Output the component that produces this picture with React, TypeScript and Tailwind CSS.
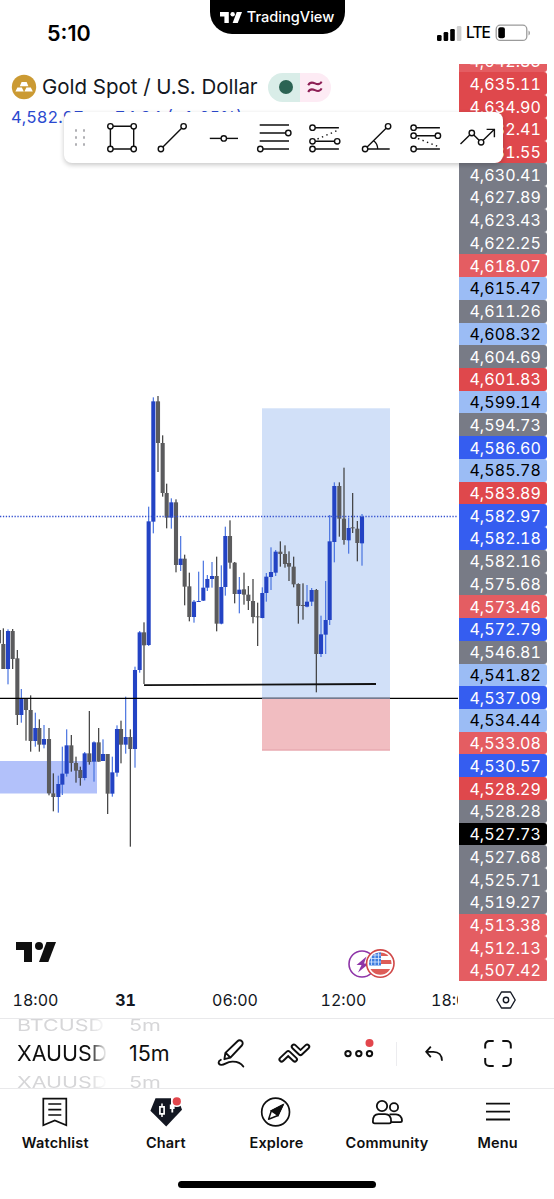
import type { ReactNode } from "react";

const RED = "bg-[#df484c] text-white";
const ROSE = "bg-[#e45d62] text-white";
const GRAY = "bg-[#787b86] text-white";
const SKY = "bg-[#9bbcf5] text-black";
const BLUE = "bg-[#355df0] text-white";
const BLACK = "bg-black text-white";

const prices: [string, string][] = [
  ["4,642.83", ROSE],
  ["4,635.11", RED],
  ["4,634.90", RED],
  ["4,632.41", RED],
  ["4,631.55", RED],
  ["4,630.41", GRAY],
  ["4,627.89", GRAY],
  ["4,623.43", GRAY],
  ["4,622.25", GRAY],
  ["4,618.07", ROSE],
  ["4,615.47", SKY],
  ["4,611.26", GRAY],
  ["4,608.32", SKY],
  ["4,604.69", GRAY],
  ["4,601.83", RED],
  ["4,599.14", SKY],
  ["4,594.73", GRAY],
  ["4,586.60", BLUE],
  ["4,585.78", SKY],
  ["4,583.89", RED],
  ["4,582.97", BLUE],
  ["4,582.18", BLUE],
  ["4,582.16", GRAY],
  ["4,575.68", GRAY],
  ["4,573.46", ROSE],
  ["4,572.79", BLUE],
  ["4,546.81", GRAY],
  ["4,541.82", SKY],
  ["4,537.09", BLUE],
  ["4,534.44", SKY],
  ["4,533.08", ROSE],
  ["4,530.57", BLUE],
  ["4,528.29", RED],
  ["4,528.28", GRAY],
  ["4,527.73", BLACK],
  ["4,527.68", GRAY],
  ["4,525.71", GRAY],
  ["4,519.27", GRAY],
  ["4,513.38", ROSE],
  ["4,512.13", ROSE],
  ["4,507.42", ROSE],
];

// [x, high, low, body top, body bottom, up]; three units to a pixel, from each session's origin
type Candle = [number, number, number, number, number, 0 | 1];

const sessions: { x: number; y: number; candles: Candle[] }[] = [
  {
    x: 0,
    y: 600,
    candles: [
      [-3, 90, 130, 90, 130, 0], [10, 85, 207, 132, 207, 0], [24, 88, 253, 93, 207, 1],
      [38, 87, 207, 93, 177, 0], [52, 150, 375, 175, 345, 0], [64, 267, 368, 297, 345, 1],
      [78, 296, 422, 297, 330, 0], [92, 286, 455, 330, 423, 0], [106, 338, 440, 384, 423, 1],
      [118, 358, 455, 384, 434, 0], [132, 375, 445, 417, 434, 1], [147, 384, 586, 417, 580, 0],
      [160, 520, 634, 580, 591, 0], [175, 527, 638, 552, 591, 1], [187, 440, 585, 521, 554, 1],
      [200, 388, 530, 436, 521, 1], [214, 405, 515, 436, 489, 0], [228, 470, 548, 489, 512, 0],
      [241, 500, 557, 510, 534, 0], [254, 456, 541, 460, 534, 1], [268, 333, 494, 460, 486, 0],
      [282, 424, 545, 427, 485, 1], [296, 384, 485, 427, 485, 0], [309, 418, 483, 462, 483, 1],
      [323, 462, 642, 462, 581, 0], [337, 470, 590, 517, 581, 1], [351, 376, 530, 387, 518, 1],
      [363, 362, 490, 387, 434, 0], [377, 290, 461, 411, 434, 1], [391, 388, 740, 411, 447, 0],
      [405, 200, 503, 210, 447, 1], [419, 93, 218, 97, 210, 1], [432, 67, 252, 97, 136, 0],
    ],
  },
  {
    x: 120,
    y: 385,
    candles: [
      [86, 365, 783, 409, 780, 1], [100, 37, 445, 49, 410, 1], [114, 33, 261, 49, 174, 0],
      [128, 151, 335, 174, 324, 0], [140, 296, 430, 324, 398, 0], [154, 340, 431, 352, 398, 1],
      [168, 343, 562, 352, 540, 0], [182, 453, 558, 521, 540, 1], [194, 509, 661, 521, 605, 0],
      [208, 563, 709, 604, 696, 0], [222, 645, 713, 650, 696, 1], [236, 560, 650, 648, 651, 1],
      [250, 527, 648, 608, 647, 1], [262, 570, 618, 582, 608, 1], [276, 531, 608, 573, 582, 1],
      [290, 515, 739, 573, 716, 0], [304, 541, 718, 606, 716, 1], [316, 425, 632, 453, 606, 1],
      [330, 406, 551, 453, 533, 0], [344, 531, 655, 533, 627, 0], [358, 576, 685, 614, 627, 1],
      [372, 563, 659, 613, 629, 0], [385, 603, 675, 629, 648, 0], [399, 582, 715, 648, 696, 0],
      [413, 653, 783, 694, 697, 0],
    ],
  },
  {
    x: 255,
    y: 400,
    candles: [
      [22, 562, 655, 579, 654, 1], [34, 519, 605, 530, 579, 1], [48, 442, 570, 516, 531, 1],
      [62, 450, 528, 455, 518, 1], [76, 424, 500, 455, 462, 0], [90, 436, 503, 462, 492, 0],
      [102, 454, 543, 489, 500, 0], [116, 470, 562, 500, 553, 0], [130, 550, 671, 552, 618, 0],
      [144, 550, 659, 615, 618, 0], [156, 555, 622, 605, 620, 1], [170, 564, 618, 570, 605, 1],
      [184, 567, 877, 570, 762, 0], [198, 647, 771, 703, 762, 1], [212, 543, 762, 660, 704, 1],
      [224, 345, 675, 424, 660, 1], [238, 247, 487, 258, 426, 1], [253, 247, 410, 258, 356, 0],
      [267, 203, 434, 356, 420, 0], [281, 353, 461, 384, 421, 1], [293, 279, 399, 382, 385, 0],
      [307, 363, 484, 386, 429, 0], [321, 342, 497, 350, 430, 1],
    ],
  },
];

function Logo({ className }: { className: string }) {
  return (
    <svg viewBox="0 0 40 20" className={className} fill="currentColor">
      <path d="M0 0h16v20H8V8H0z" />
      <circle cx="23" cy="4" r="4" />
      <path d="M30.5 0H40l-7.7 20H23z" />
    </svg>
  );
}

function StatusBar() {
  return (
    <header className="flex h-16 items-start">
      <div className="w-[209.5px] pt-[19px] pl-[47px] text-[21.5px] leading-7 font-semibold">5:10</div>
      <div className="flex h-[34px] w-[135px] items-center justify-center gap-[5px] rounded-b-[22px] bg-black text-white">
        <Logo className="h-[11px] w-[22px]" />
        <span className="text-[14.6px] leading-5 font-medium">TradingView</span>
      </div>
      <div className="flex flex-1 items-center justify-end pt-[22px] pr-[23px]">
        <svg viewBox="0 0 26 17" className="h-[17px] w-[26px]">
          <rect x="1" y="10" width="4.6" height="6" rx="1.3" />
          <rect x="7.6" y="7" width="4.6" height="9" rx="1.3" />
          <rect x="14.2" y="4" width="4.6" height="12" rx="1.3" />
          <rect x="20.8" y="1" width="4.6" height="15" rx="1.3" fill="#cfcfcf" />
        </svg>
        <span className="ml-[4px] w-[26px] text-[15.5px] leading-[22px] font-medium tracking-[-0.9px]">LTE</span>
        <svg viewBox="0 0 36 18" className="ml-[3px] h-[18px] w-9">
          <rect x="1.2" y="1.2" width="30.6" height="15.2" rx="4" fill="none" stroke="#9b9b9b" strokeWidth="1.3" />
          <rect x="3.3" y="3.3" width="6.6" height="11" rx="2" />
          <path d="M33.5 6.5c2 1 2 4 0 5z" fill="#9b9b9b" />
        </svg>
      </div>
    </header>
  );
}

function ChartCanvas() {
  return (
    <svg viewBox="0 64 459 917" className="h-[917px] w-[459px]">
      <rect x="0" y="761" width="97" height="32.5" fill="#b2c1fa" />
      <rect x="262" y="408.3" width="128" height="290" fill="#d1e0f8" />
      <rect x="262" y="698.5" width="128" height="52" fill="#f1bdc1" />
      <path d="M262 750h128" stroke="#e3a0a8" />
      {sessions.map((s) =>
        s.candles.map(([x, high, low, top, bottom, up]) => {
          const cx = s.x + x / 3;
          return (
            <g key={cx}>
              <rect
                x={cx - 0.6}
                y={s.y + high / 3}
                width={1.2}
                height={(low - high) / 3}
                fill={up ? "#4a74e0" : "#3d3d3d"}
              />
              <rect
                x={cx - 2.05}
                y={s.y + top / 3}
                width={4.1}
                height={(bottom - top) / 3}
                fill={up ? "#2343c4" : "#5b5b5d"}
              />
            </g>
          );
        }),
      )}
      <path d="M0 516.5h458" stroke="#3450cf" strokeWidth="1.3" strokeDasharray="1.3 1.6" />
      <path d="M0 698.4h458" stroke="#000" strokeWidth="1.3" />
      <path d="M262 698.4h128" stroke="#747a90" strokeWidth="1.4" />
      <path d="M144 685.2L376 684" stroke="#111" strokeWidth="1.8" />
    </svg>
  );
}

function Legend() {
  return (
    <div className="absolute top-[8px] left-[11px]">
      <div className="flex h-[30px] items-center">
        <svg viewBox="0 0 26 26" className="h-[26px] w-[26px]">
          <circle cx="13" cy="13" r="12.2" fill="#cb9a33" />
          <path d="M10.6 8h5l1.8 4.3H8.8zM6.4 13.4h4.4l2 4.2H4.4zM15.4 13.4h4.4l2 4.2h-8.4z" fill="#fff" />
        </svg>
        <span className="ml-[5px] w-[226px] text-[20.5px] leading-[30px] tracking-[-0.02px] whitespace-nowrap text-[#131722]">
          Gold Spot / U.S. Dollar
        </span>
        <div className="flex h-[29px] w-[63px] overflow-hidden rounded-full">
          <div className="flex w-8 items-center bg-[#d9ede8] pl-[11px]">
            <span className="h-[14px] w-[14px] rounded-full bg-[#2b6353]" />
          </div>
          <div className="flex flex-1 items-center bg-[#fdebf4] pl-[7px]">
            <svg viewBox="0 0 16 14" className="h-[14px] w-4" fill="none" stroke="#8d1f55" strokeWidth="2">
              <path d="M1.2 5.2C2.6 2.4 5 2 8 3.4s5.200 1 6.600-1.800M1.200 12C2.600 9.200 5 8.800 8 10.200s5.200 1 6.600-1.800" />
            </svg>
          </div>
        </div>
      </div>
      <div className="mt-[4px] flex gap-[20px] text-[16.5px] leading-[22px] tabular-nums text-[#2b49cf]">
        <span>4,582.97</span>
        <span>+74.34 (+1.65%)</span>
      </div>
    </div>
  );
}

function Node({ x, y }: { x: number; y: number }) {
  return <circle cx={x} cy={y} r="2.7" fill="#fff" />;
}

function Tool({ children }: { children: ReactNode }) {
  return (
    <svg viewBox="0 0 50.8 51" className="h-[51px] w-[50.8px]" fill="none" stroke="#0f0f0f" strokeWidth="1.4">
      {children}
    </svg>
  );
}

function DrawingTools() {
  return (
    <div className="absolute top-[48px] left-[64px] flex h-[51px] w-[439px] rounded-lg bg-white shadow-[0_2px_5px_rgba(0,0,0,0.22)]">
      <div className="grid w-[32.6px] grid-cols-[2.4px_2.4px] content-center gap-x-[5.6px] gap-y-[4.6px] pl-[11px]">
        {[0, 1, 2, 3, 4, 5].map((i) => (
          <span key={i} className="h-[2.4px] w-[2.4px] rounded-full bg-[#b0b0b4]" />
        ))}
      </div>
      <Tool>
        <path d="M13.400 14.300h23.300V37H13.400z" />
        <Node x={13.4} y={14.3} />
        <Node x={36.7} y={14.3} />
        <Node x={13.4} y={37} />
        <Node x={36.7} y={37} />
      </Tool>
      <Tool>
        <path d="M13.900 37L36.600 14.300" />
        <Node x={13.9} y={37} />
        <Node x={36.6} y={14.3} />
      </Tool>
      <Tool>
        <path d="M11.800 26.400H40" />
        <Node x={25.8} y={26.4} />
      </Tool>
      <Tool>
        <path d="M10.700 13H40M10.700 21H38M10.700 29H40M12 37h28" />
        <Node x={39.3} y={21} />
        <Node x={11.3} y={37} />
      </Tool>
      <Tool>
        <path d="M12.500 15.700h26.400M12.500 29.300h24.700M12.500 37h26.400" />
        <path d="M17.500 27L38.500 18" strokeDasharray="1.400 3.400" />
        <Node x={12.5} y={15.7} />
        <Node x={12.5} y={29.3} />
        <Node x={37.2} y={29.3} />
        <Node x={12.5} y={37} />
      </Tool>
      <Tool>
        <path d="M37.100 14.300L14.100 37h24.600M22.600 28.700c2.700 2 4.100 5 4.100 8.300" />
        <Node x={14.1} y={37} />
        <Node x={37.1} y={14.3} />
      </Tool>
      <Tool>
        <path d="M12.600 15.700h26.300M12.600 23.700h24.300M12.600 37h26.300" />
        <path d="M17 26.500L38.500 35" strokeDasharray="1.400 3.400" />
        <Node x={12.6} y={15.7} />
        <Node x={12.6} y={23.7} />
        <Node x={36.9} y={23.7} />
        <Node x={12.6} y={37} />
      </Tool>
      <Tool>
        <path d="M8.500 32l11.300-11 9.300 9.300L42.200 17.600M34.600 17.400h7.800v7.800" />
        <Node x={19.8} y={21} />
        <Node x={29.1} y={30.3} />
      </Tool>
    </div>
  );
}

function EventBadges() {
  return (
    <div className="absolute top-[884px] left-[347px]">
      <svg viewBox="0 0 49 32" className="h-8 w-[49px]">
        <circle cx="15" cy="16" r="13" fill="#fff" stroke="#8e35a8" strokeWidth="1.6" />
        <path d="M19.500 8.500L9.500 17h5l-3.500 7.500L22 15.500h-5z" fill="#8e35a8" />
        <clipPath id="flag">
          <circle cx="33.300" cy="15.600" r="11.200" />
        </clipPath>
        <circle cx="33.300" cy="15.600" r="13.700" fill="#fff" stroke="#d04848" strokeWidth="1.600" />
        <g clipPath="url(#flag)">
          <path d="M20 4h28v4H20zM20 12h28v4H20zM20 21h28v6H20z" fill="#dd5d58" />
          <path d="M20 3h14v14.500H20z" fill="#3f7ee0" />
          <path d="M24.500 3v14M28 3v14M31.500 3v14M20 7h14M20 10.500h14M20 14h14" stroke="#dcebff" strokeWidth="0.800" />
        </g>
      </svg>
    </div>
  );
}

function PriceScale() {
  return (
    <div className="h-[917px] w-[88px] overflow-hidden">
      <div className="-mt-[14.3px] flex flex-col">
        {prices.map(([price, tone]) => (
          <div
            key={price}
            className={`flex h-[22.74px] shrink-0 items-center rounded-r-[3px] pl-[10.4px] text-[16px] leading-none tracking-[0.1px] tabular-nums ${tone}`}
          >
            {price}
          </div>
        ))}
      </div>
    </div>
  );
}

function TimeAxis() {
  return (
    <div className="flex h-[37px] text-[16px] leading-[38px] text-[#131722] tabular-nums">
      <div className="flex w-[458px] overflow-hidden text-center whitespace-nowrap">
        <span className="w-[71px] shrink-0">18:00</span>
        <span className="w-[109px] shrink-0 font-bold">31</span>
        <span className="w-[110px] shrink-0">06:00</span>
        <span className="w-[107px] shrink-0">12:00</span>
        <span className="shrink-0 pl-[34px]">18:00</span>
      </div>
      <div className="flex flex-1 items-center justify-center pt-[1px]">
        <svg viewBox="0 0 20 18" className="h-[18px] w-5" fill="none" stroke="#131722" strokeWidth="1.400">
          <path d="M5.500 1h9L19.200 9l-4.700 8h-9L.800 9z" strokeLinejoin="round" />
          <circle cx="10" cy="9" r="2.700" />
        </svg>
      </div>
    </div>
  );
}

function Wheel({ items, className }: { items: string[]; className: string }) {
  return (
    <div className={`flex h-full flex-col overflow-hidden whitespace-nowrap ${className}`}>
      <span className="-mt-[9px] h-[28px] scale-y-75 text-[21.5px] leading-[30px] text-[#d6d6d8]">{items[0]}</span>
      <span className="h-[29px] text-[21.500px] leading-[31px] text-[#0f0f0f]">{items[1]}</span>
      <span className="h-[28px] scale-y-75 text-[21.5px] leading-[30px] text-[#d6d6d8]">{items[2]}</span>
    </div>
  );
}

function BottomToolbar() {
  return (
    <div className="flex h-[71px] items-center border-y border-[#e9e9eb]">
      <Wheel
        items={["BTCUSD", "XAUUSD", "XAUUSD"]}
        className="ml-[17px] w-[90px] [mask-image:linear-gradient(to_right,#000_80%,transparent)]"
      />
      <Wheel items={["5m", "15m", "5m"]} className="ml-[22px] w-[84px]" />
      <svg viewBox="0 0 36 36" className="h-9 w-9" fill="none" stroke="#0f0f0f" strokeWidth="1.900" strokeLinejoin="round" strokeLinecap="round">
        <path d="M11.400 23.200l1-6.300L24.500 5.200a3 3 0 0 1 4.300 4.300L17.400 21.700zM12.700 16.900l4.600 4.600" />
        <path d="M7.800 23.800c-2.700 1-3.200 4.700.4 5.100 3.500.4 5-3.100 11-3.300 5-.2 8.800 1.500 11.100 5" />
      </svg>
      <svg viewBox="0 0 36 36" className="ml-[27px] h-9 w-9" fill="none" strokeLinecap="round" strokeLinejoin="round">
        <path d="M5.600 23.400l6.600-6.200 6.600 6.200" stroke="#0f0f0f" strokeWidth="6.200" />
        <path d="M17.900 10.700l6.600 6.200 6.600-6.200" stroke="#0f0f0f" strokeWidth="6.200" />
        <path d="M5.600 23.400l6.600-6.200 6.600 6.200" stroke="#fff" strokeWidth="2.300" />
        <path d="M17.900 10.700l6.600 6.200 6.600-6.200" stroke="#fff" strokeWidth="2.300" />
      </svg>
      <svg viewBox="0 0 36 36" className="ml-[29px] h-9 w-9" fill="none" stroke="#0f0f0f" strokeWidth="2">
        <circle cx="7" cy="17.600" r="2.700" />
        <circle cx="17.800" cy="17.600" r="2.700" />
        <circle cx="28.500" cy="17.600" r="2.700" />
        <circle cx="28.500" cy="7" r="4" fill="#e2464c" stroke="none" />
      </svg>
      <span className="ml-[19px] h-6 w-px bg-[#ececef]" />
      <svg viewBox="0 0 36 36" className="ml-[19px] h-9 w-9" fill="none" stroke="#0f0f0f" strokeWidth="1.800">
        <path d="M14.800 10.600l-4.600 5.200 4.600 5.400M10.400 15.800h7.100c5 0 8.500 3.400 8.500 9" />
      </svg>
      <svg viewBox="0 0 36 36" className="ml-[28px] h-9 w-9" fill="none" stroke="#0f0f0f" strokeWidth="2">
        <path d="M5.200 12.500v-3.500a4 4 0 0 1 4-4h4.500M22.300 5h4.500a4 4 0 0 1 4 4v3.500M30.800 22v4a4 4 0 0 1-4 4h-4.500M13.700 30H9.200a4 4 0 0 1-4-4V22" />
      </svg>
    </div>
  );
}

function NavItem({ label, children }: { label: string; children: ReactNode }) {
  return (
    <div className="flex w-[110.600px] flex-col items-center">
      <svg viewBox="0 0 36 34" className="h-[34px] w-9" fill="none" stroke="#0f0f0f" strokeWidth="1.500">
        {children}
      </svg>
      <span className="mt-[4px] text-[14.500px] leading-5 font-semibold tracking-[0.2px] text-[#0f0f0f]">{label}</span>
    </div>
  );
}

function BottomNav() {
  return (
    <nav className="flex h-[92px] pt-[6px]">
      <NavItem label="Watchlist">
        <path d="M6.300 3.700h23v26.600l-11.500-4.800-11.500 4.800zM11.300 9h13M11.300 14.700h13M11.300 20h13" strokeWidth="1.700" />
      </NavItem>
      <NavItem label="Chart">
        <path d="M7.500 3.300h22.300l4.200 11.400-15.800 16.900L2.400 15.700z" fill="#131722" stroke="none" />
        <path d="M14 8.500v13.500" stroke="#fff" strokeWidth="1.500" />
        <path d="M11.900 11.800h4.200v7h-4.200z" stroke="#fff" strokeWidth="1.700" fill="#131722" />
        <path d="M23 3h2.200v14.500H23.400V14H21.800v-4.500H23z" fill="#fff" stroke="none" />
        <path d="M24.400 9.500h2.200v4.500h-2.200z" fill="#fff" stroke="none" />
        <circle cx="28.800" cy="6.400" r="5.700" fill="#fff" stroke="none" />
        <circle cx="28.800" cy="6.400" r="4.100" fill="#e2464c" stroke="none" />
      </NavItem>
      <NavItem label="Explore">
        <circle cx="17.600" cy="17" r="13.900" strokeWidth="1.700" />
        <path d="M10.600 24.200l2.700-8.300L24.900 10l-5 10.500z" strokeLinejoin="round" />
        <path d="M13.300 15.900L24.900 10l-5 10.500-2.300-1.800z" fill="#0f0f0f" />
      </NavItem>
      <NavItem label="Community">
        <g strokeWidth="1.800">
          <circle cx="13" cy="11" r="5.200" />
          <circle cx="25" cy="12.200" r="4.100" />
          <path d="M3.900 26.500c0-4.600 2-7.300 5.700-7.300h6.500c3.800 0 6 2.700 6 7.300 0 1.100-.7 1.800-1.800 1.800H5.700c-1.100 0-1.800-.7-1.800-1.800z" />
          <path d="M20.500 19.300h6.500c3.400 0 6 2.700 6 6.200 0 1-.7 1.600-1.700 1.600h-9.600" />
        </g>
      </NavItem>
      <NavItem label="Menu">
        <path d="M6 8.700h24M6 16.700h24M6 24.500h24" strokeWidth="1.800" />
      </NavItem>
    </nav>
  );
}

export default function App() {
  return (
    <div className="flex h-[1199px] w-[554px] flex-col overflow-hidden bg-white font-['Inter','Liberation_Sans',sans-serif] text-black">
      <StatusBar />
      <main className="relative flex h-[917px]">
        <ChartCanvas />
        <PriceScale />
        <Legend />
        <DrawingTools />
        <Logo className="absolute top-[878px] left-[16px] h-5 w-10 text-[#0f0f0f]" />
        <EventBadges />
      </main>
      <TimeAxis />
      <BottomToolbar />
      <BottomNav />
      <div className="flex justify-center">
        <span className="h-[7px] w-[198px] rounded-full bg-black" />
      </div>
    </div>
  );
}
